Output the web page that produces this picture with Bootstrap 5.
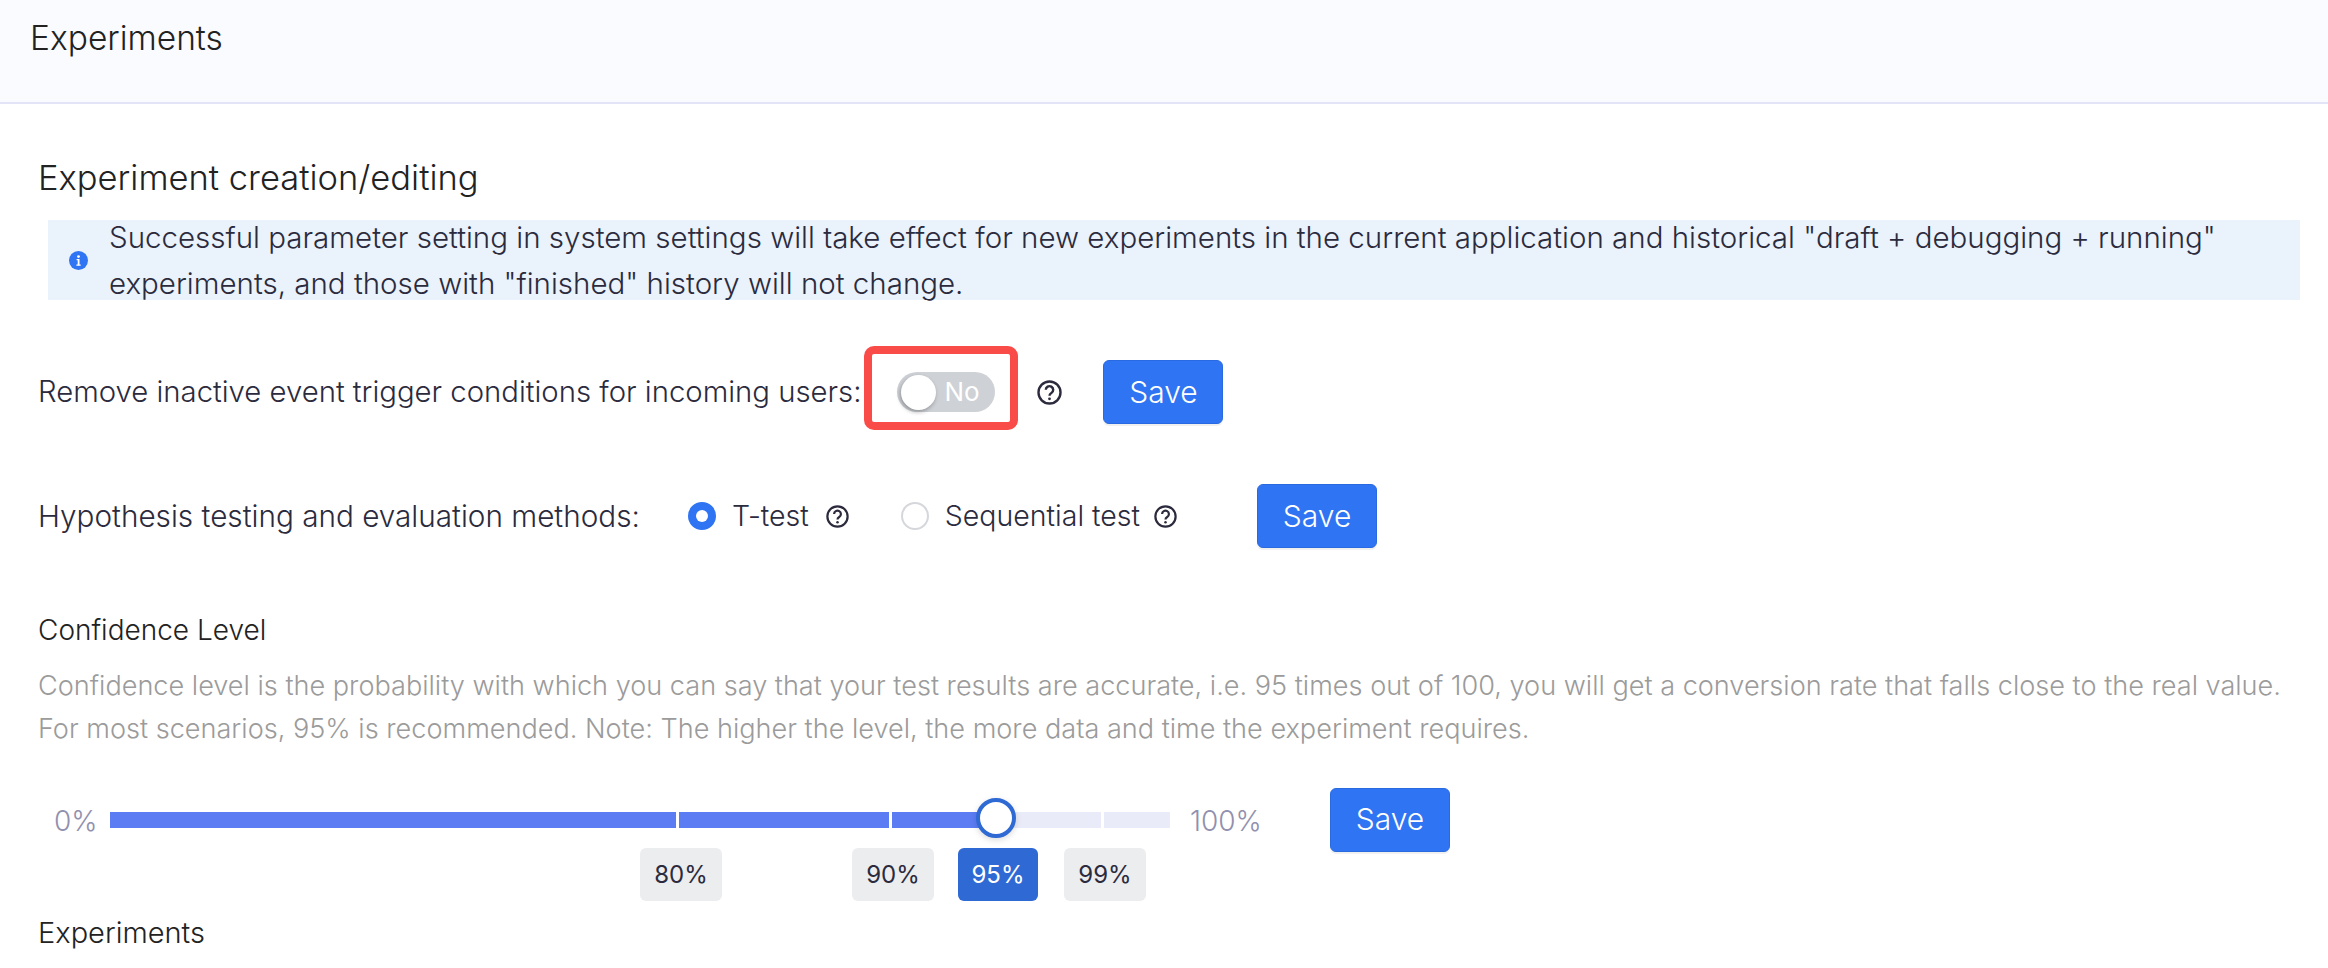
<!DOCTYPE html>
<html lang="en">
<head>
    <meta charset="UTF-8">
    <title>Experiments</title>
    <link href="https://cdn.jsdelivr.net/npm/bootstrap@5.3.3/dist/css/bootstrap.min.css" rel="stylesheet">
    <style>
        body {
            font-family: Inter, "Liberation Sans", sans-serif;
            font-weight: 300;
            font-size: 29.3px;
            color: #2b2b3d;
            background: #fff;
        }

        .page-head {
            height: 104px;
            padding: 16px 30px 0;
            background: #fafbfe;
            border-bottom: 2px solid #e3e4f7;
            font-size: 33.5px;
            line-height: 44px;
            color: #222;
        }

        .page-body {
            padding: 52px 28px 0 38px;
        }

        .block-title {
            font-size: 34.5px;
            line-height: 44px;
            color: #222;
        }

        .notice-bar {
            height: 80px;
            margin: 20px 0 0 10px;
            padding-left: 21px;
            background: #eaf2fb;
            font-size: 29.5px;
            line-height: 46px;
        }

        .notice-bar span {
            margin-left: 21px;
            max-width: 2130px;
        }

        .setting-row {
            height: 92px;
            margin-top: 46px;
        }

        .red-frame {
            width: 154px;
            height: 84px;
            margin-left: 3px;
            border: 8px solid #f94c49;
            border-radius: 10px;
        }

        .off-switch {
            width: 98px;
            height: 40px;
            margin: 8px 0 0 25px;
            padding-left: 4px;
            border-radius: 20px;
            background: #ced1d6;
            color: #fff;
            font-size: 26px;
            font-weight: 400;
            line-height: 40px;
        }

        .off-knob {
            width: 35px;
            height: 35px;
            border-radius: 50%;
            background: #fff;
            box-shadow: -1px 2px 4px rgba(0, 0, 0, .3);
        }

        .tip-icon {
            flex: none;
        }

        .tip-first {
            margin-left: 19px;
        }

        .save-btn {
            width: 120px;
            height: 64px;
            padding: 0;
            font-size: 30px;
            font-weight: 300;
            color: #fff;
            background: #2f74f2;
            border: 1px solid #2a6ae0;
            border-radius: 6px;
            box-shadow: 0 2px 0 rgba(0, 0, 0, .06);
        }

        .method-row {
            height: 64px;
            margin-top: 46px;
        }

        .method-label {
            font-size: 29.7px;
        }

        .method-row .form-check-input {
            width: 28px;
            height: 28px;
            margin: 0;
            flex: none;
            border: 2px solid #d5d7dc;
        }

        .method-row .form-check-input:checked {
            background-color: #2f74f2;
            border-color: #2f74f2;
        }

        .method-option {
            font-size: 28.5px;
        }

        .level-title {
            margin-top: 62px;
            font-size: 28px;
            line-height: 40px;
            color: #222;
        }

        .level-desc {
            margin: 14px 0 0;
            font-size: 27.1px;
            line-height: 43px;
            color: #9b9b9b;
        }

        .slider-row {
            height: 65px;
            margin-top: 37px;
        }

        .end-label {
            padding-top: 2px;
            font-size: 28px;
            color: #9190ae;
        }

        .slider-track {
            position: relative;
            width: 1060px;
            height: 16px;
            background: #e9ebf8;
        }

        .slider-fill {
            height: 100%;
            background: #5c7cf4;
        }

        .slider-tick {
            position: absolute;
            top: 0;
            width: 3px;
            height: 16px;
            background: #fff;
        }

        .slider-knob {
            position: absolute;
            top: -14px;
            left: 866px;
            width: 40px;
            height: 40px;
            border: 4px solid #2f69d4;
            border-radius: 50%;
            background: #fff;
            box-shadow: 0 2px 6px rgba(0, 0, 0, .15);
        }

        .mark-chip {
            position: absolute;
            top: 36px;
            height: 53px;
            width: 82px;
            border-radius: 6px;
            background: #ecedef;
            font-size: 24px;
            font-weight: 400;
            line-height: 53px;
            text-align: center;
        }

        .mark-chip.is-active {
            background: #2f69d4;
            color: #fff;
        }

        .section-foot {
            margin-top: 61px;
            font-size: 29px;
            line-height: 40px;
            color: #222;
        }
    </style>
</head>

<body>
    <div class="page-head">Experiments</div>

    <div class="page-body">
        <div class="block-title">Experiment creation/editing</div>

        <div class="notice-bar d-flex align-items-center">
            <svg class="tip-icon" width="19" height="19" viewBox="0 0 19 19">
                <circle cx="9.5" cy="9.5" r="9.5" fill="#2f74f2"/>
                <circle cx="9.5" cy="5.6" r="1.4" fill="#fff"/>
                <path d="M7.6 8h2.9v5.4h1.2v1.3H7.4v-1.3h1.3V9.3H7.6z" fill="#fff"/>
            </svg>
            <span>Successful parameter setting in system settings will take effect for new experiments in the current application and historical "draft + debugging + running" experiments, and those with "finished" history will not change.</span>
        </div>

        <div class="setting-row d-flex align-items-center">
            <div>Remove inactive event trigger conditions for incoming users:</div>
            <div class="red-frame d-flex align-items-center align-self-start">
                <div class="off-switch d-flex align-items-center gap-2">
                    <div class="off-knob"></div>
                    <div>No</div>
                </div>
            </div>
            <svg class="tip-icon tip-first" width="25" height="25" viewBox="0 0 25 25" fill="none" stroke="#2b2b3d">
                <circle cx="12.5" cy="12.5" r="11" stroke-width="2.4"/>
                <path d="M8.8 9.8a3.7 3.7 0 1 1 5.6 3.2c-1.3.8-1.9 1.4-1.9 2.8" stroke-width="2.4"/>
                <circle cx="12.5" cy="18.8" r="1.4" fill="#2b2b3d" stroke="none"/>
            </svg>
            <button class="btn save-btn" type="button" style="margin-left:41px">Save</button>
        </div>

        <div class="method-row d-flex align-items-center">
            <div class="method-label">Hypothesis testing and evaluation methods:</div>
            <input class="form-check-input" type="radio" name="method" checked style="margin-left:48px">
            <div class="method-option ms-3">T-test</div>
            <svg class="tip-icon" width="23" height="23" viewBox="0 0 25 25" fill="none" stroke="#2b2b3d" style="margin-left:17px">
                <circle cx="12.5" cy="12.5" r="11" stroke-width="2.4"/>
                <path d="M8.8 9.8a3.7 3.7 0 1 1 5.6 3.2c-1.3.8-1.9 1.4-1.9 2.8" stroke-width="2.4"/>
                <circle cx="12.5" cy="18.8" r="1.4" fill="#2b2b3d" stroke="none"/>
            </svg>
            <input class="form-check-input" type="radio" name="method" style="margin-left:52px">
            <div class="method-option ms-3">Sequential test</div>
            <svg class="tip-icon" width="23" height="23" viewBox="0 0 25 25" fill="none" stroke="#2b2b3d" style="margin-left:14px">
                <circle cx="12.5" cy="12.5" r="11" stroke-width="2.4"/>
                <path d="M8.8 9.8a3.7 3.7 0 1 1 5.6 3.2c-1.3.8-1.9 1.4-1.9 2.8" stroke-width="2.4"/>
                <circle cx="12.5" cy="18.8" r="1.4" fill="#2b2b3d" stroke="none"/>
            </svg>
            <button class="btn save-btn" type="button" style="margin-left:80px">Save</button>
        </div>

        <div class="level-title">Confidence Level</div>
        <p class="level-desc">Confidence level is the probability with which you can say that your test results are accurate, i.e. 95 times out of 100, you will get a conversion rate that falls close to the real value.<br>For most scenarios, 95% is recommended. Note: The higher the level, the more data and time the experiment requires.</p>

        <div class="slider-row d-flex align-items-center">
            <div class="end-label" style="margin-left:16px;width:56px">0%</div>
            <div class="slider-track">
                <div class="slider-fill" style="width:83.6%"></div>
                <div class="slider-tick" style="left:566px"></div>
                <div class="slider-tick" style="left:779px"></div>
                <div class="slider-tick" style="left:991px"></div>
                <div class="slider-knob"></div>
                <div class="mark-chip" style="left:530px">80%</div>
                <div class="mark-chip" style="left:742px">90%</div>
                <div class="mark-chip is-active" style="left:848px;width:80px">95%</div>
                <div class="mark-chip" style="left:954px">99%</div>
            </div>
            <div class="end-label" style="margin-left:20px;width:140px">100%</div>
            <button class="btn save-btn" type="button">Save</button>
        </div>

        <div class="section-foot">Experiments</div>
    </div>

    <script src="https://cdn.jsdelivr.net/npm/bootstrap@5.3.3/dist/js/bootstrap.bundle.min.js"></script>
</body>
</html>
